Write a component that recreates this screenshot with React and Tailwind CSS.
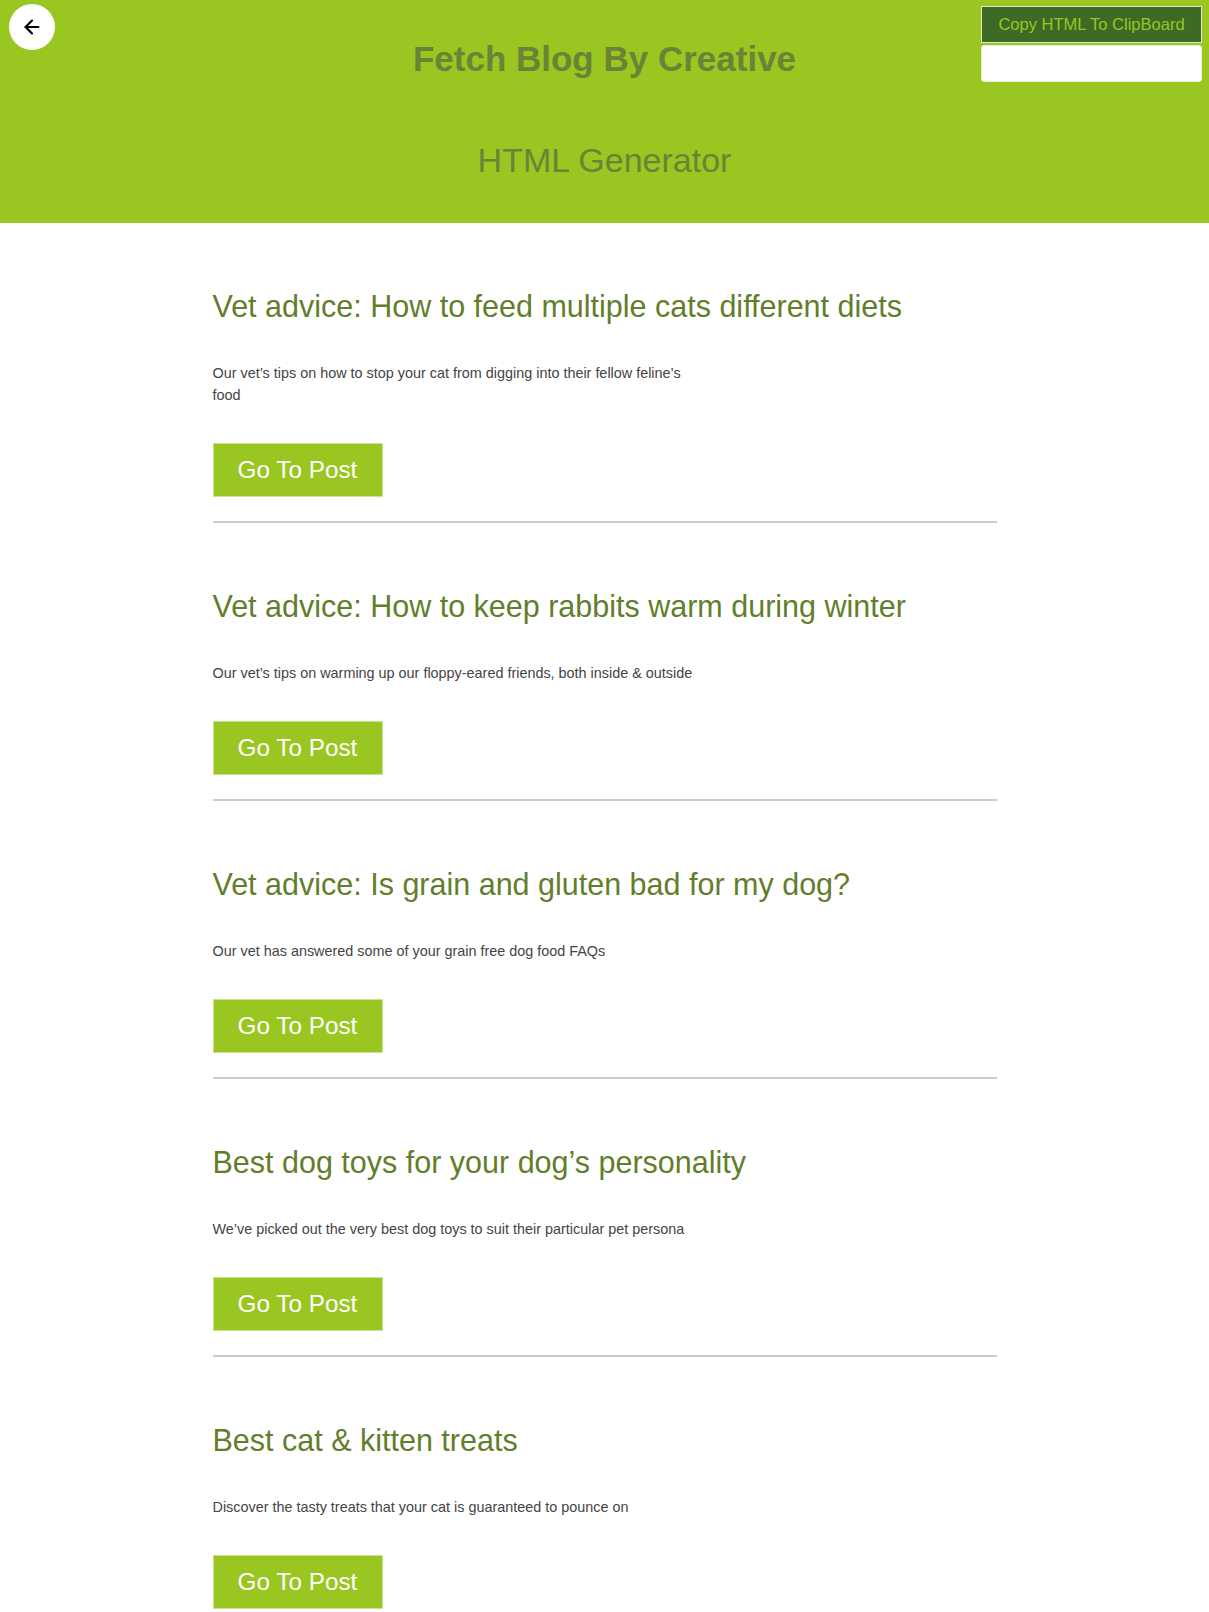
import React from 'react';
import { ArrowLeft } from 'lucide-react';

const posts = [
  {
    title: 'Vet advice: How to feed multiple cats different diets',
    text: 'Our vet\u2019s tips on how to stop your cat from digging into their fellow feline\u2019s food',
  },
  {
    title: 'Vet advice: How to keep rabbits warm during winter',
    text: 'Our vet\u2019s tips on warming up our floppy-eared friends, both inside & outside',
  },
  {
    title: 'Vet advice: Is grain and gluten bad for my dog?',
    text: 'Our vet has answered some of your grain free dog food FAQs',
  },
  {
    title: 'Best dog toys for your dog\u2019s personality',
    text: 'We\u2019ve picked out the very best dog toys to suit their particular pet persona',
  },
  {
    title: 'Best cat & kitten treats',
    text: 'Discover the tasty treats that your cat is guaranteed to pounce on',
  },
];

function PostItem({ title, text, last }) {
  return (
    <div className={last ? '' : 'mb-[65px]'}>
      <h2 className="text-[30.5px] leading-[36px] text-[#627e2b]">{title}</h2>
      <p className="mt-[38px] max-w-[490px] text-[14.4px] leading-[22px] text-[#444444]">{text}</p>
      <button className="mt-[37px] h-[54px] w-[170px] border border-[#c9e28f] bg-[#99c621] text-[24.3px] text-white">
        Go To Post
      </button>
      {!last && <hr className="mt-[24px] border-0 border-t-2 border-[#cccccc]" />}
    </div>
  );
}

export default function App() {
  return (
    <div className="min-h-screen bg-white font-['Liberation_Sans',Arial,sans-serif]">
      {/* Header */}
      <header className="relative h-[223px] bg-[#99c621] pt-[39px] text-center text-[#6b8336]">
        <button className="absolute left-[9px] top-[4px] flex h-[46px] w-[46px] items-center justify-center rounded-full bg-white text-black">
          <ArrowLeft className="h-[22px] w-[22px]" strokeWidth={2.4} />
        </button>

        <div className="absolute right-[7px] top-[6px] flex w-[221px] flex-col gap-[2px]">
          <button className="h-[37px] border border-[#dbe6cf] bg-[#3d6a24] text-[16.5px] text-[#9ac621]">
            Copy HTML To ClipBoard
          </button>
          <div className="h-[37px] rounded-[3px] border border-[#e4efcc] bg-white" />
        </div>

        <h1 className="text-[35px] font-bold leading-[40px]">Fetch Blog By Creative</h1>
        <h2 className="mt-[61px] text-[34px] leading-[40px]">HTML Generator</h2>
      </header>

      {/* Posts */}
      <main className="mx-auto max-w-[784px] pt-[65px]">
        {posts.map((p, i) => (
          <PostItem key={i} title={p.title} text={p.text} last={i === posts.length - 1} />
        ))}
      </main>
    </div>
  );
}
